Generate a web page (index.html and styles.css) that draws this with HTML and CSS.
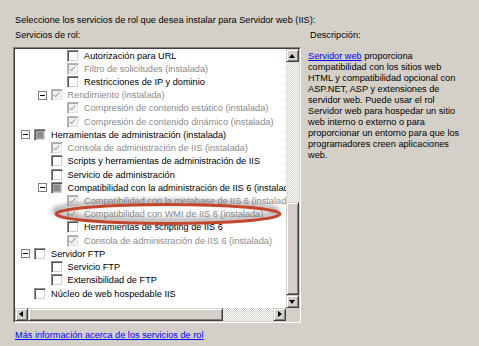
FILE: index.html
```html
<!DOCTYPE html>
<html>

<head>
    <meta charset="utf-8">
    <title>Servicios de rol</title>
    <link rel="stylesheet" href="styles.css">
</head>

<body>
  <div class="page">
    <div class="intro">Seleccione los servicios de rol que desea instalar para Servidor web (IIS):</div>

    <div class="columns">
      <div class="left">
        <div class="label">Servicios de rol:</div>

        <div class="tree">
          <div class="tree-inner">
            <div class="list">
              <div class="row l3"><span class="exp"></span><span class="cb"></span>Autorización para URL</div>
              <div class="row l3 off"><span class="exp"></span><span class="cb dis chk"></span>Filtro de solicitudes (instalada)</div>
              <div class="row l3"><span class="exp"></span><span class="cb"></span>Restricciones de IP y dominio</div>
              <div class="row l2 off"><span class="exp minus"></span><span class="cb dis chk"></span>Rendimiento (instalada)</div>
              <div class="row l3 off"><span class="exp"></span><span class="cb dis chk"></span>Compresión de contenido estático (instalada)</div>
              <div class="row l3 off"><span class="exp"></span><span class="cb dis chk"></span>Compresión de contenido dinámico (instalada)</div>
              <div class="row l1"><span class="exp minus"></span><span class="cb part"></span>Herramientas de administración (instalada)</div>
              <div class="row l2 off"><span class="exp"></span><span class="cb dis chk"></span>Consola de administración de IIS (instalada)</div>
              <div class="row l2"><span class="exp"></span><span class="cb"></span>Scripts y herramientas de administración de IIS</div>
              <div class="row l2"><span class="exp"></span><span class="cb"></span>Servicio de administración</div>
              <div class="row l2"><span class="exp minus"></span><span class="cb part"></span>Compatibilidad con la administración de IIS 6 (instalada)</div>
              <div class="row l3 off"><span class="exp"></span><span class="cb dis chk"></span>Compatibilidad con la metabase de IIS 6 (instalada)</div>
              <div class="row l3 off"><span class="exp"></span><span class="cb dis chk"></span>Compatibilidad con WMI de IIS 6 (instalada)</div>
              <div class="row l3"><span class="exp"></span><span class="cb"></span>Herramientas de scripting de IIS 6</div>
              <div class="row l3 off"><span class="exp"></span><span class="cb dis chk"></span>Consola de administración de IIS 6 (instalada)</div>
              <div class="row l1"><span class="exp minus"></span><span class="cb"></span>Servidor FTP</div>
              <div class="row l2"><span class="exp"></span><span class="cb"></span>Servicio FTP</div>
              <div class="row l2"><span class="exp"></span><span class="cb"></span>Extensibilidad de FTP</div>
              <div class="row l1"><span class="exp"></span><span class="cb"></span>Núcleo de web hospedable IIS</div>
            </div>

            <div class="vbar">
              <div class="btn up"></div>
              <div class="track"></div>
              <div class="btn thumb-v"></div>
              <div class="btn down"></div>
            </div>

            <div class="hbar">
              <div class="btn left-arrow"></div>
              <div class="btn thumb-h"></div>
              <div class="track"></div>
              <div class="btn right-arrow"></div>
            </div>

            <div class="corner"></div>
          </div>

          <!-- red mark drawn over the WMI row -->
          <svg class="mark" width="250" height="36" viewBox="0 0 250 36">
            <defs>
              <filter id="shade" x="-10%" y="-60%" width="120%" height="220%">
                <feDropShadow dx="-2" dy="-3" stdDeviation="2.5" flood-color="#6a6a6a" flood-opacity="0.85"/>
              </filter>
            </defs>
            <ellipse cx="124" cy="20" rx="112" ry="9.5" fill="none" stroke="#c3452c" stroke-width="3" filter="url(#shade)"/>
          </svg>
        </div>

        <div class="more"><a href="#">Más información acerca de los servicios de rol</a></div>
      </div>

      <div class="desc">
        <div class="label">Descripción:</div>
        <p><a href="#">Servidor web</a> proporciona<br>
        compatibilidad con los sitios web<br>
        HTML y compatibilidad opcional con<br>
        ASP.NET, ASP y extensiones de<br>
        servidor web. Puede usar el rol<br>
        Servidor web para hospedar un sitio<br>
        web interno o externo o para<br>
        proporcionar un entorno para que los<br>
        programadores creen aplicaciones<br>
        web.</p>
      </div>
    </div>
  </div>
</body>
</html>
```

FILE: styles.css
```css
body {
  margin: 0;
  background-color: #d4d0c8;
  font-family: "Liberation Sans", Arial, sans-serif;
  font-size: 9.2px;
  color: #000;
}

a {
  color: #0000ff;
  text-decoration: underline;
}

.page {
  padding: 14px 0 0 13px;
}

.intro {
  margin: 0 0 3px 2px;
  line-height: 12px;
  white-space: nowrap;
}

.columns {
  display: flex;
  gap: 7px;
}

.left {
  width: 288px;
  flex: none;
}

.label {
  margin: 0 0 6px 2px;
  line-height: 12px;
}

/* sunken list box */
.tree {
  position: relative;
  height: 276px;
  box-sizing: border-box;
  padding: 1px;
  border: 1px solid;
  border-color: #808080 #fff #fff #808080;
  box-shadow: inset 1px 1px #404040, inset -1px -1px #d4d0c8;
}

.tree-inner {
  display: grid;
  grid-template-columns: 1fr 13px;
  grid-template-rows: 1fr 13px;
  height: 100%;
}

.list {
  background-color: #fff;
  overflow: hidden;
}

.row {
  height: 13.22px;
  display: flex;
  align-items: center;
  white-space: nowrap;
}

.l1 { padding-left: 6px; }
.l2 { padding-left: 22.5px; }
.l3 { padding-left: 39px; }

.off {
  color: #8a8a8a;
}

.exp {
  width: 9px;
  height: 9px;
  margin-right: 4px;
  flex: none;
  box-sizing: border-box;
}

.minus {
  position: relative;
  border: 1px solid #808080;
  background-color: #fff;
}

.minus::after {
  content: "";
  position: absolute;
  left: 1px;
  top: 3px;
  width: 5px;
  height: 1px;
  background-color: #000;
}

/* checkboxes */
.cb {
  position: relative;
  width: 12px;
  height: 12px;
  margin-right: 5px;
  flex: none;
  box-sizing: border-box;
  background-color: #fff;
  border: 1px solid;
  border-color: #8d8d8d #fff #fff #8d8d8d;
  box-shadow: inset 1px 1px #555, inset -1px -1px #d4d0c8;
}

.cb.dis {
  background-color: #f3f2ef;
  border-color: #b8b8b8 #fff #fff #b8b8b8;
  box-shadow: inset 1px 1px #a8a8a8, inset -1px -1px #e2e0da;
}

.chk::after {
  content: "";
  position: absolute;
  left: 3px;
  top: 1px;
  width: 2px;
  height: 5px;
  border: solid #a4a4a4;
  border-width: 0 1.5px 1.5px 0;
  transform: rotate(40deg);
}

.part {
  background-color: #e4e2dc;
}

.part::after {
  content: "";
  position: absolute;
  left: 2px;
  top: 2px;
  width: 6px;
  height: 6px;
  background-color: #8c8c8c;
  box-shadow: 0 0 0 1px #b0b0b0;
}

/* scroll bars */
.vbar, .hbar {
  display: flex;
  background: repeating-conic-gradient(#fff 0 25%, #d4d0c8 0 50%) 0 0 / 2px 2px;
}

.vbar {
  flex-direction: column;
}

.track {
  flex: 1;
}

.btn {
  position: relative;
  flex: none;
  box-sizing: border-box;
  width: 13px;
  height: 13px;
  background-color: #d4d0c8;
  border: 1px solid;
  border-color: #d4d0c8 #404040 #404040 #d4d0c8;
  box-shadow: inset 1px 1px #fff, inset -1px -1px #808080;
}

.thumb-v {
  height: 93px;
}

.thumb-h {
  width: 195px;
}

.btn::after {
  content: "";
  position: absolute;
  width: 0;
  height: 0;
  border: 3.5px solid transparent;
}

.up::after {
  left: 2px;
  top: 1px;
  border-bottom: 4px solid #000;
}

.down::after {
  left: 2px;
  top: 4px;
  border-top: 4px solid #000;
}

.left-arrow::after {
  left: 0;
  top: 2px;
  border-right: 4px solid #000;
}

.right-arrow::after {
  left: 4px;
  top: 2px;
  border-left: 4px solid #000;
}

.corner {
  background-color: #d4d0c8;
}

.mark {
  position: absolute;
  left: 30px;
  top: 146px;
  overflow: visible;
}

.more {
  margin: 6px 0 0 2px;
  line-height: 12px;
}

.desc p {
  margin: 0;
  padding-top: 4px;
  line-height: 11px;
  white-space: nowrap;
}
```
